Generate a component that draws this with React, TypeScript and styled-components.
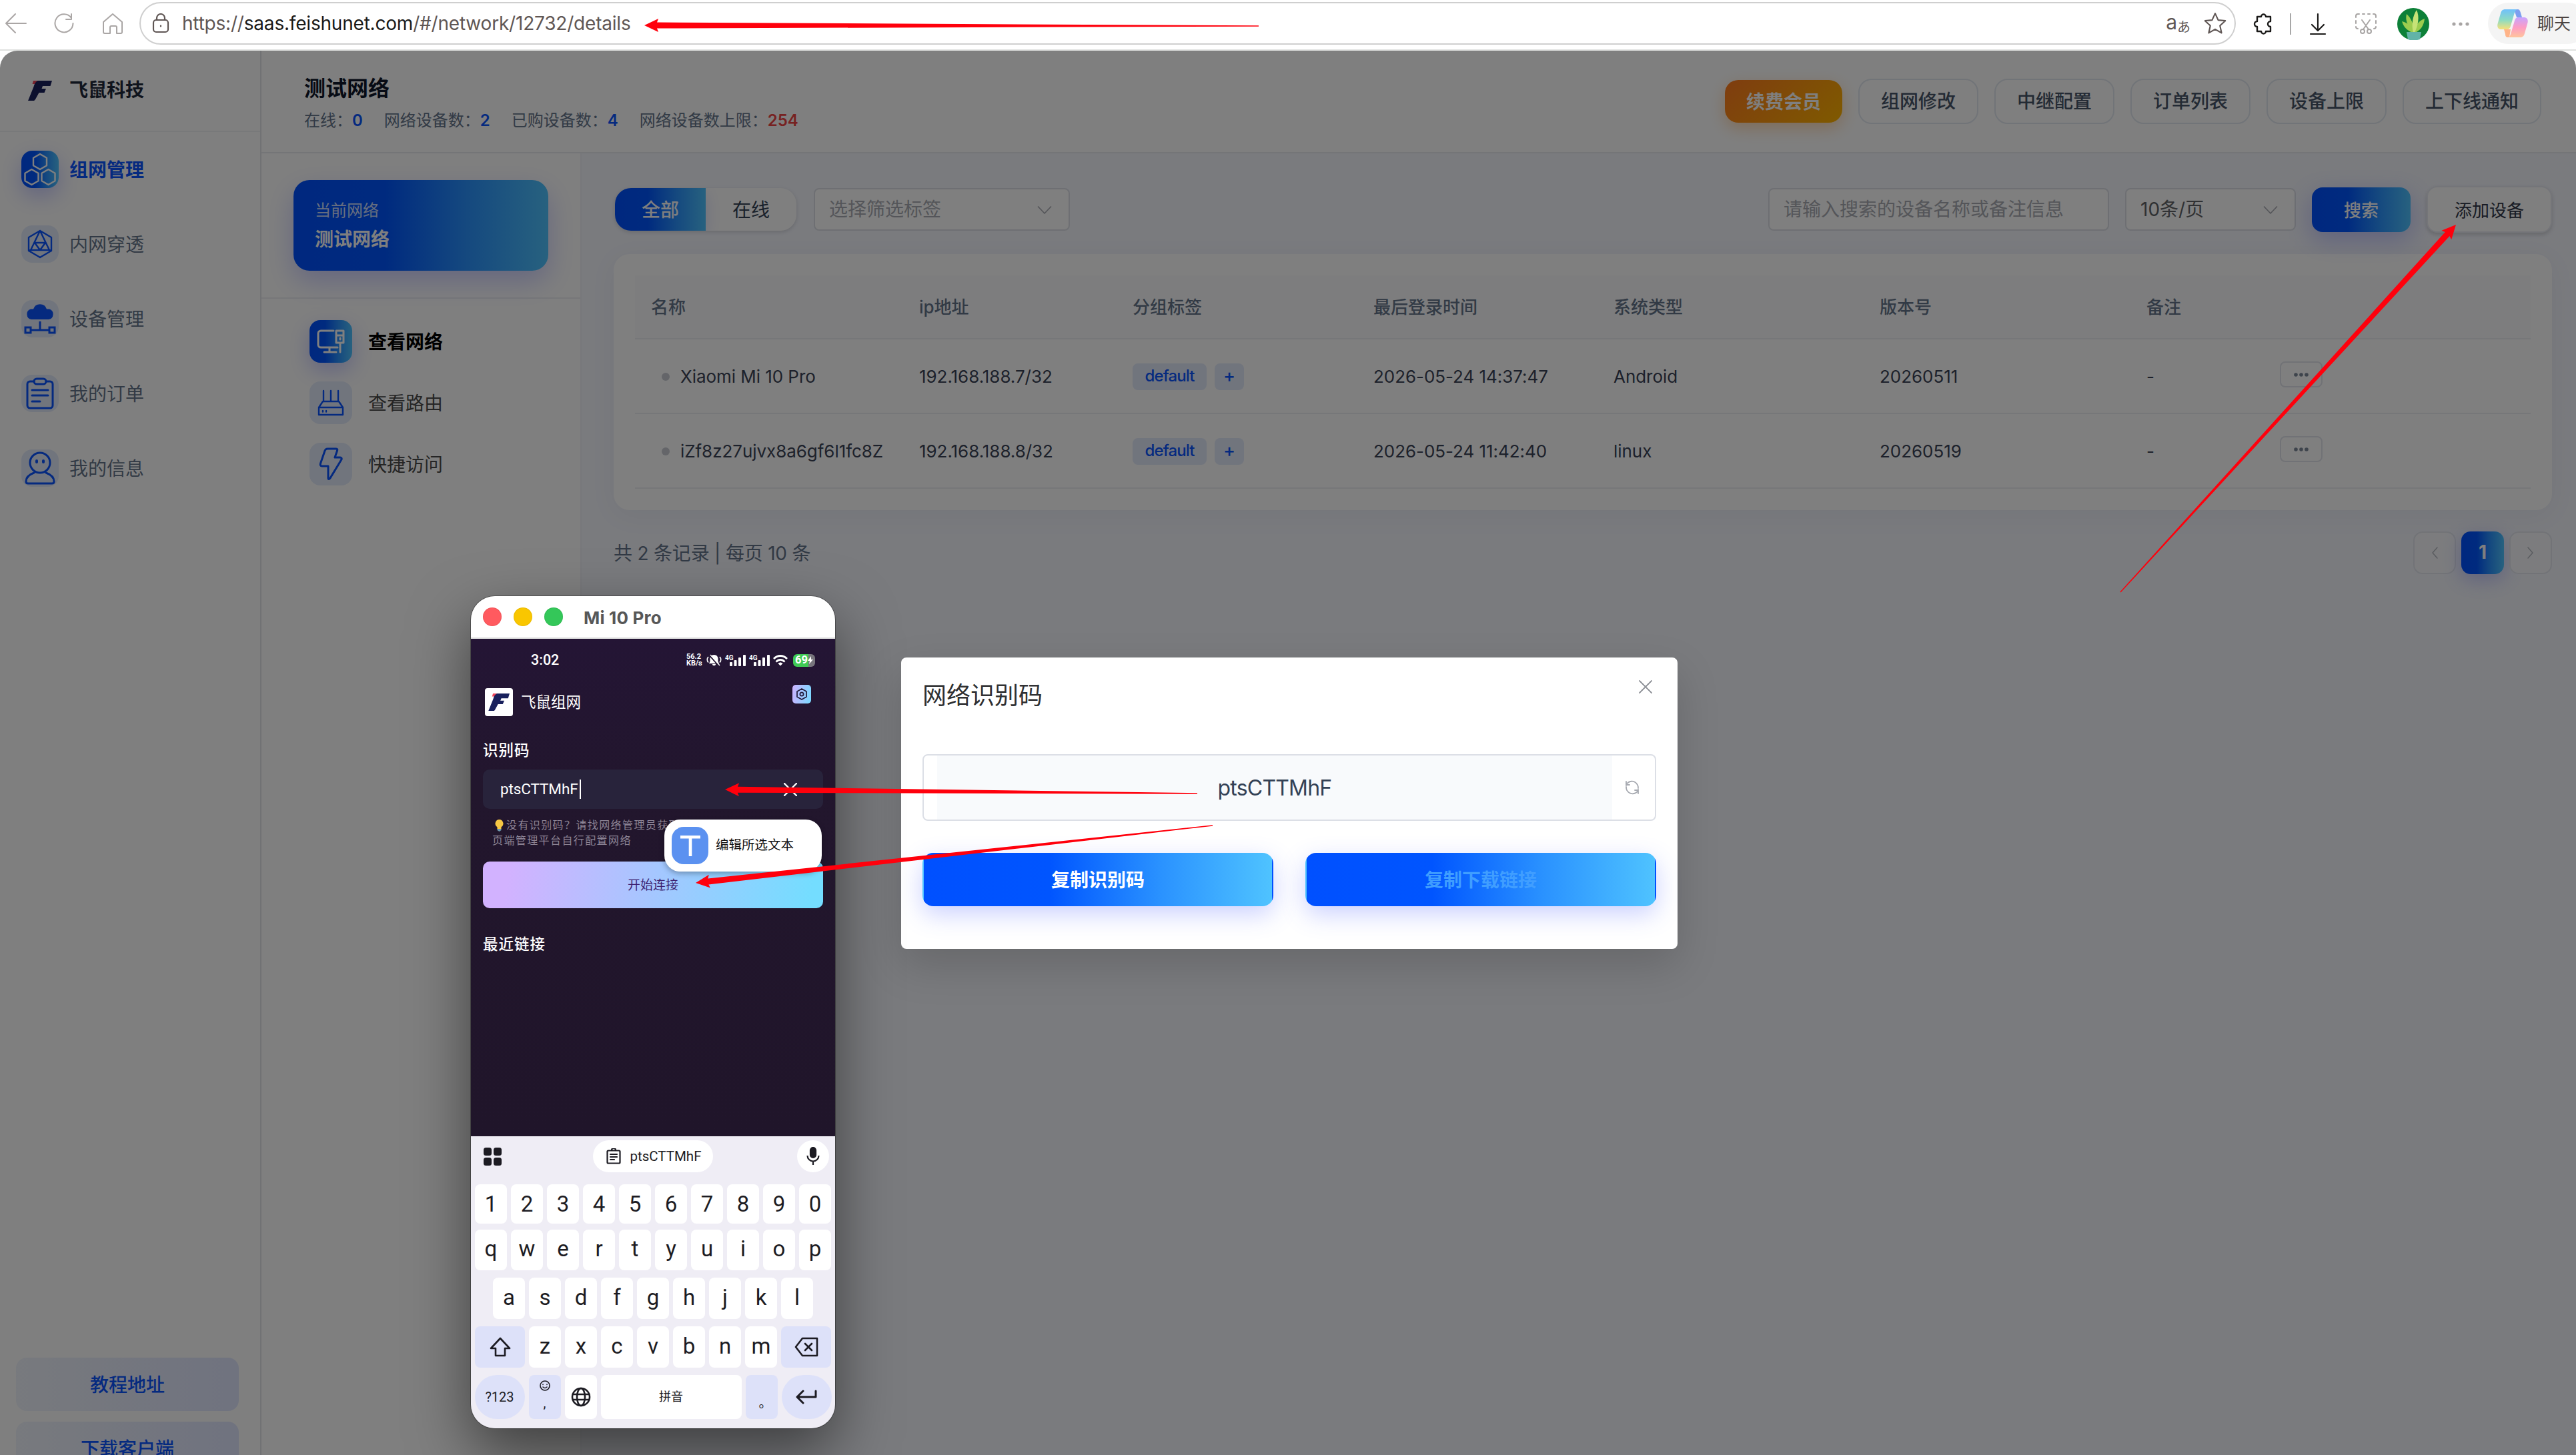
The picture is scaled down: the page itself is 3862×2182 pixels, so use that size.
import {FC, ReactNode} from 'react';
import styled, {createGlobalStyle, css} from 'styled-components';

const GRADIENT = 'linear-gradient(90deg, #0050ff 0%, #0055ff 36%, #2a92ff 68%, #4fc3ff 100%)';

const columns = ['名称', 'ip地址', '分组标签', '最后登录时间', '系统类型', '版本号', '备注', ''];

const devices = [
    {name: 'Xiaomi Mi 10 Pro', ip: '192.168.188.7/32', login: '2026-05-24 14:37:47', os: 'Android', version: '20260511'},
    {name: 'iZf8z27ujvx8a6gf6l1fc8Z', ip: '192.168.188.8/32', login: '2026-05-24 11:42:40', os: 'linux', version: '20260519'},
];

/**
 * Icons
 */
const Line: FC<{size?: number; w?: number; h?: number; box?: string; sw?: number; children: ReactNode}> = ({size = 32, w, h, box = '0 0 32 32', sw = 2, children}) => (
    <svg width={w || size} height={h || size} viewBox={box} fill="none" stroke="currentColor" strokeWidth={sw} strokeLinecap="round" strokeLinejoin="round">
        {children}
    </svg>
);

const BrandMark: FC<{size: number}> = ({size}) => (
    <svg width={size} height={size * 0.84} viewBox="0 0 36 30">
        <path d="M8 0h8l-3 5H6.500z" fill="#f0475b" />
        <path d="M15 0h21l-2.500 8H22l-1.500 4H27l-2.500 6H16.500L11 28l-2 2H0L8.500 9C10 4 11.500 1.500 15 0z" fill="#18205c" />
    </svg>
);

const HexIcon = () => (
    <Line size={52} box="0 0 52 52" sw={2.400}>
        <path d="M26 3l10 5.800v11.400L26 26l-10-5.800V8.800zM13.500 26l10 5.800v11.400L13.500 49l-10-5.800V31.800zM38.500 26l10 5.800v11.400l-10 5.800-10-5.800V31.800z" />
    </Line>
);

const PolyIcon = () => (
    <Line w={38} h={44} box="0 0 38 44" sw={2.400}>
        <path d="M19 2l17 10v20L19 42 2 32V12zM19 2L5 31h28zM11 20h16l-8 11zM2 32l3-1M36 32l-3-1" />
    </Line>
);

const CloudIcon = () => (
    <svg width="48" height="46" viewBox="0 0 48 46" fill="none" stroke="currentColor" strokeWidth="3">
        <path d="M11 24a8 8 0 0 1-1-15.500h4a10.500 10.500 0 0 1 20 0h4a8 8 0 0 1-1 15.500z" fill="currentColor" stroke="none" />
        <path d="M24 27v13M11 40h26M2 36h8v8H2zM38 36h8v8h-8z" />
    </svg>
);

const OrderIcon = () => (
    <Line w={42} h={48} box="0 0 42 48" sw={3}>
        <path d="M12 6H6a4 4 0 0 0-4 4v32a4 4 0 0 0 4 4h30a4 4 0 0 0 4-4V10a4 4 0 0 0-4-4h-6" />
        <rect x="12" y="2" width="18" height="8" rx="4" />
        <path d="M9 19h24M9 27h24M9 36h12" />
    </Line>
);

const UserIcon = () => (
    <Line w={46} h={50} box="0 0 46 50" sw={3}>
        <circle cx="23" cy="17" r="15" />
        <path d="M14 32c-8 3-12 8-12 13 0 2 1 3 3 3h36c2 0 3-1 3-3 0-5-4-10-12-13" />
        <path d="M18 14v2M28 14v2" strokeWidth="4" />
    </Line>
);

const ScreenIcon = () => (
    <Line w={42} h={36} box="0 0 42 36" sw={3}>
        <path d="M25 2H6a4 4 0 0 0-4 4v17a4 4 0 0 0 4 4h25M19 27v7M11 34h18" />
        <path d="M29 2h11v18H29zM29 9h11M35 13v2M35 20v14" />
    </Line>
);

const RouterIcon = () => (
    <Line w={40} h={40} box="0 0 40 40" sw={2.400}>
        <path d="M9 2v16M20 2v16M31 2v16M8 18h24l6 9v11H2V27zM2 27h36M8 32v1.500M13 32v1.500" />
    </Line>
);

const BoltIcon = () => (
    <Line w={36} h={50} box="0 0 36 50" sw={3}>
        <path d="M13 2h13c2 0 2 1 1.500 3L24 15h8c2 0 2.500 1.500 2 3L17 46c-1.500 2-3 2-3 0V28H5c-3 0-3-2-2.500-4L9 5c.8-2 2-3 4-3z" />
    </Line>
);

const Chevron = () => (
    <Line w={22} h={14} box="0 0 22 14" sw={1.700}><path d="M1.500 2L11 12l9.500-10" /></Line>
);

const menu = [
    {label: '组网管理', icon: <HexIcon />, active: true},
    {label: '内网穿透', icon: <PolyIcon />},
    {label: '设备管理', icon: <CloudIcon />},
    {label: '我的订单', icon: <OrderIcon />},
    {label: '我的信息', icon: <UserIcon />},
];

const subMenu = [
    {label: '查看网络', icon: <ScreenIcon />, active: true},
    {label: '查看路由', icon: <RouterIcon />},
    {label: '快捷访问', icon: <BoltIcon />},
];

/**
 * Browser toolbar
 */
const BrowserBar: FC = () => (
    <Toolbar>
        <NavIcons>
            <Line size={32} sw={2}><path d="M31 16H1M15 2L1 16l14 14" /></Line>
            <Line size={32} sw={2}><path d="M27 8A13.500 13.500 0 1 0 29.500 16M27 2v8h-8" /></Line>
            <Line size={34} box="0 0 34 34" sw={2}><path d="M3 14L17 2l14 12v15a2 2 0 0 1-2 2h-6V22a2 2 0 0 0-2-2h-6a2 2 0 0 0-2 2v9H5a2 2 0 0 1-2-2z" /></Line>
        </NavIcons>
        <AddressBar>
            <Line w={26} h={30} box="0 0 26 30" sw={2.200}>
                <rect x="2" y="10" width="22" height="18" rx="4" /><path d="M7 10V7a6 6 0 0 1 12 0v3M13 18.500v1" />
            </Line>
            <Url>https://<b>saas.feishunet.com</b>/#/network/12732/details</Url>
            <Translate>a<small>あ</small></Translate>
            <Line size={34} sw={2}>
                <path d="M16 2l4.300 9.400 10 1-7.500 6.900 2.200 10.200-9-5.200-9 5.200 2.200-10.200-7.500-6.900 10-1z" />
            </Line>
        </AddressBar>
        <Tools>
            <Line size={34} box="0 0 34 34" sw={2.400}>
                <path d="M9 6h6a3.500 3.500 0 0 1 7 0h7v7a4 4 0 0 0 0 8v7h-7a3.500 3.500 0 0 1-7 0H9v-7a4 4 0 0 1 0-8z" />
            </Line>
            <Separator />
            <Line w={26} h={34} box="0 0 26 34" sw={2.200}><path d="M13 2v25M4 18l9 9 9-9M2 32h22" /></Line>
            <Muted>
                <Line size={34} box="0 0 34 34" sw={2}>
                    <path d="M2 7V5a3 3 0 0 1 3-3h2M12 2h3M20 2h3M28 2h1a3 3 0 0 1 3 3v2M32 12v4M2 12v4M2 21a3 3 0 0 0 3 3M32 21a3 3 0 0 1-3 3M11 11l10 14M23 11L13 25" />
                    <circle cx="12" cy="28" r="3" /><circle cx="22" cy="28" r="3" />
                </Line>
            </Muted>
            <svg width="48" height="48" viewBox="0 0 48 48">
                <circle cx="24" cy="24" r="24" fill="#0d8038" />
                <g fill="#9ccc4f">
                    <path d="M23 37C18 30 11 20 14 9c7 6 11 16 11 28z" />
                    <path d="M24 37c-5-1-14-6-17-17 9 2 15 8 17 17z" />
                    <path d="M26 37c0-8 5-18 15-21-1 10-6 18-15 21z" />
                </g>
                <path d="M24 37c-3-12-1-25 5-34 5 10 2 24-3 34z" fill="#c6e377" />
                <path d="M14 36h22l-2 11c-6 2-13 2-18 0z" fill="#62b3a8" />
            </svg>
            <Muted>
                <svg width="28" height="8" viewBox="0 0 28 8" fill="currentColor">
                    <circle cx="4" cy="4" r="2.600" /><circle cx="14" cy="4" r="2.600" /><circle cx="24" cy="4" r="2.600" />
                </svg>
            </Muted>
        </Tools>
        <ChatPill>
            <svg width="46" height="42" viewBox="0 0 46 42">
                <defs>
                    <linearGradient id="cpA" x1="0" y1="0" x2="0" y2="1">
                        <stop offset="0" stopColor="#6fc0fb" /><stop offset=".55" stopColor="#8fdcc0" /><stop offset="1" stopColor="#f7e07a" />
                    </linearGradient>
                    <linearGradient id="cpB" x1="0" y1="0" x2="0" y2="1">
                        <stop offset="0" stopColor="#c7a4ff" /><stop offset=".5" stopColor="#fd9cc4" /><stop offset="1" stopColor="#ffc59c" />
                    </linearGradient>
                </defs>
                <path d="M25 0h6c2 0 3 2 4 5l2 7h-8z" fill="#7d9ff0" />
                <path d="M10 30h10l-2 12h-2c-3 0-4-2-4-5z" fill="#ffb489" />
                <path d="M12 0h18c-3 1-4 4-5 8l-5 17c-1 4-3 5-6 5H6c-5 0-7-4-5-10L5 6c1-4 3-6 7-6z" fill="url(#cpA)" />
                <path d="M34 42H16c3-1 4-4 5-8l5-17c1-4 3-5 6-5h8c5 0 7 4 5 10l-4 14c-1 4-3 6-7 6z" fill="url(#cpB)" />
            </svg>
            聊天
        </ChatPill>
    </Toolbar>
);

const DeviceTable: FC = () => (
    <TableCard>
        <HeaderTr>
            {columns.map((c, i) => <Cell key={i}>{c}</Cell>)}
        </HeaderTr>
        {devices.map((d) => (
            <Tr key={d.ip}>
                <Cell><Dot />{d.name}</Cell>
                <Cell>{d.ip}</Cell>
                <Cell><Tag>default</Tag><Tag $plus>+</Tag></Cell>
                <Cell>{d.login}</Cell>
                <Cell>{d.os}</Cell>
                <Cell>{d.version}</Cell>
                <Cell>-</Cell>
                <Cell>
                    <MoreButton>
                        <svg width="24" height="6" viewBox="0 0 24 6" fill="currentColor">
                            <circle cx="4" cy="3" r="2.800" /><circle cx="12" cy="3" r="2.800" /><circle cx="20" cy="3" r="2.800" />
                        </svg>
                    </MoreButton>
                </Cell>
            </Tr>
        ))}
    </TableCard>
);

const Console: FC = () => (
    <Page>
        <Sidebar>
            <Brand><BrandMark size={36} />飞鼠科技</Brand>
            <Menu>
                {menu.map((m) => (
                    <MenuItem key={m.label} $active={m.active}>
                        <IconBox $size={56} $active={m.active}>{m.icon}</IconBox>
                        <MenuLabel>{m.label}</MenuLabel>
                    </MenuItem>
                ))}
            </Menu>
            <SideButton>教程地址</SideButton>
            <SideButton>下载客户端</SideButton>
        </Sidebar>
        <Content>
            <Header>
                <div>
                    <NetworkName>测试网络</NetworkName>
                    <Stats>
                        <span>在线：<b>0</b></span>
                        <span>网络设备数：<b>2</b></span>
                        <span>已购设备数：<b>4</b></span>
                        <Limit>网络设备数上限：<b>254</b></Limit>
                    </Stats>
                </div>
                <HeaderActions>
                    <RenewButton>续费会员</RenewButton>
                    {['组网修改', '中继配置', '订单列表', '设备上限', '上下线通知'].map((t) => <HeaderButton key={t}>{t}</HeaderButton>)}
                </HeaderActions>
            </Header>
            <Body>
                <SubSidebar>
                    <CurrentWrap>
                        <CurrentCard><small>当前网络</small>测试网络</CurrentCard>
                    </CurrentWrap>
                    <SubMenu>
                        {subMenu.map((m) => (
                            <SubItem key={m.label} $active={m.active}>
                                <IconBox $size={64} $active={m.active}>{m.icon}</IconBox>
                                <MenuLabel>{m.label}</MenuLabel>
                            </SubItem>
                        ))}
                    </SubMenu>
                </SubSidebar>
                <Main>
                    <Filters>
                        <Segment><SegmentItem $active>全部</SegmentItem><SegmentItem>在线</SegmentItem></Segment>
                        <Field $width={384} $hint>选择筛选标签<Chevron /></Field>
                        <Spacer />
                        <Field $width={511} $hint>请输入搜索的设备名称或备注信息</Field>
                        <Field $width={256}>10条/页<Chevron /></Field>
                        <SearchButton>搜索</SearchButton>
                        <AddButton>添加设备</AddButton>
                    </Filters>
                    <DeviceTable />
                    <Footer>
                        <Total>共 2 条记录 | 每页 10 条</Total>
                        <Pager>
                            <PageButton><Line w={12} h={20} box="0 0 12 20" sw={1.500}><path d="M10 2L3 10l7 8" /></Line></PageButton>
                            <PageButton $active>1</PageButton>
                            <PageButton><Line w={12} h={20} box="0 0 12 20" sw={1.500}><path d="M2 2l7 8-7 8" /></Line></PageButton>
                        </Pager>
                    </Footer>
                </Main>
            </Body>
        </Content>
        <Overlay><CodeDialog /></Overlay>
    </Page>
);

const CodeDialog: FC = () => (
    <Dialog>
        <DialogHead>
            网络识别码
            <Line size={22} box="0 0 22 22" sw={1.800}><path d="M2 2l18 18M20 2L2 20" /></Line>
        </DialogHead>
        <CodeInput>
            <CodeValue>ptsCTTMhF</CodeValue>
            <Line size={24} box="0 0 24 24" sw={1.800}>
                <path d="M3 9V3M3 8h5M3 8c3-6 12-8 17 0 1 2 1 4 1 5M21 15v6M21 16h-5M21 16c-3 6-12 8-17 0-1-2-1-3-1-5" />
            </Line>
        </CodeInput>
        <DialogButtons>
            <DialogButton>复制识别码</DialogButton>
            <DialogButton $faded>复制下载链接</DialogButton>
        </DialogButtons>
    </Dialog>
);

const Signal: FC = () => (
    <SignalBox>
        <span>4G</span>
        <svg width="24" height="17" viewBox="0 0 24 17" fill="#fff">
            <rect x="0" y="11" width="4" height="6" rx="1" /><rect x="6.500" y="8" width="4" height="9" rx="1" />
            <rect x="13" y="4" width="4" height="13" rx="1" /><rect x="20" y="0" width="4" height="17" rx="1" />
        </svg>
    </SignalBox>
);

const Phone: FC = () => (
    <PhoneWindow>
        <TitleBar>
            <Light $color="#ff5a5f" /><Light $color="#f9c600" /><Light $color="#34c759" />
            <span>Mi 10 Pro</span>
        </TitleBar>
        <AppScreen>
            <StatusBar>
                <Clock>3:02</Clock>
                <Speed>56.2<br />KB/s</Speed>
                <svg width="23" height="19" viewBox="0 0 23 19" fill="#fff">
                    <path d="M11.500 1c4 0 6 3 6 6v4l1.500 3h-15l1.500-3V7c0-3 2-6 6-6zM9 15h5c0 3-5 3-5 0z" />
                    <path d="M3 4C.8 6.500.8 10 3 12.500M20 4c2.200 2.500 2.200 6 0 8.500" stroke="#fff" strokeWidth="1.800" fill="none" />
                    <path d="M4 1l15 17" stroke="#241733" strokeWidth="2" /><path d="M6 1l14 16" stroke="#fff" strokeWidth="1.400" />
                </svg>
                <Signal />
                <Signal />
                <svg width="22" height="17" viewBox="0 0 22 17" fill="none" stroke="#fff" strokeWidth="2.800">
                    <path d="M1 6c6-6 14-6 20 0M4.500 10.500c4-4 9-4 13 0" /><path d="M7.500 13c2-2 5-2 7 0L11 16.500z" fill="#fff" stroke="none" />
                </svg>
                <Battery>69<svg width="8" height="12" viewBox="0 0 8 12" fill="#fff"><path d="M5 0L0 7h3l-1 5 6-7H5z" /></svg></Battery>
            </StatusBar>
            <AppHead>
                <AppLogo><BrandMark size={32} /></AppLogo>
                飞鼠组网
                <Gear>
                    <Line size={18} box="0 0 18 18" sw={1.800}><path d="M9 1l7 4v8l-7 4-7-4V5z" /><circle cx="9" cy="9" r="2.600" /></Line>
                </Gear>
            </AppHead>
            <AppLabel>识别码</AppLabel>
            <AppInput>
                ptsCTTMhF<Caret />
                <Line size={20} box="0 0 20 20" sw={2.400}><path d="M1 1l18 18M19 1L1 19" /></Line>
            </AppInput>
            <Hint>
                <svg width="13" height="18" viewBox="0 0 13 18">
                    <path d="M6.500 0A6.200 6.200 0 0 1 9.500 11.500V14h-6v-2.500A6.200 6.200 0 0 1 6.500 0z" fill="#f6c744" /><path d="M3.500 14h6v2l-3 2-3-2z" fill="#6d98ad" />
                </svg>
                没有识别码？请找网络管理员获取<br />页端管理平台自行配置网络
            </Hint>
            <ConnectButton>开始连接</ConnectButton>
            <AppLabel $last>最近链接</AppLabel>
            <Popover>
                <PopIcon>
                    <svg width="30" height="31" viewBox="0 0 30 31" fill="#fff"><rect width="30" height="4.500" /><rect x="12.700" width="4.600" height="31" /></svg>
                </PopIcon>
                编辑所选文本
            </Popover>
        </AppScreen>
        <Keyboard>
            <Suggest>
                <svg width="27" height="27" viewBox="0 0 27 27" fill="#1c1b22">
                    <rect width="12" height="12" rx="3.500" /><rect x="15" width="12" height="12" rx="3.500" />
                    <rect y="15" width="12" height="12" rx="3.500" /><rect x="15" y="15" width="12" height="12" rx="3.500" />
                </svg>
                <ClipPill>
                    <Line w={22} h={24} box="0 0 22 24" sw={2.200}>
                        <rect x="1.500" y="3.500" width="19" height="19" rx="1.500" /><path d="M8 3a3 3 0 0 1 6 0M6 9h10M6 13h10M6 17h6" />
                    </Line>
                    ptsCTTMhF
                </ClipPill>
                <Mic>
                    <svg width="20" height="28" viewBox="0 0 20 28" fill="none" stroke="#1c1b22" strokeWidth="2.200">
                        <rect x="6" y="1" width="8" height="15" rx="4" fill="#1c1b22" /><path d="M1.500 13a8.500 8.500 0 0 0 17 0M10 21v6" />
                    </svg>
                </Mic>
            </Suggest>
            <KeyRow $h={59} $gap={9}>{[...'1234567890'].map((k) => <Key key={k}>{k}</Key>)}</KeyRow>
            <KeyRow $h={61} $gap={11}>{[...'qwertyuiop'].map((k) => <Key key={k} $lift>{k}</Key>)}</KeyRow>
            <KeyRow $h={62} $gap={11}>{[...'asdfghjkl'].map((k) => <Key key={k} $lift>{k}</Key>)}</KeyRow>
            <KeyRow $h={62} $gap={11}>
                <Key $w={75} $tint><Line w={32} h={30} box="0 0 32 30" sw={2.600}><path d="M16 2l14 15h-7v11H9V17H2z" /></Line></Key>
                {[...'zxcvbnm'].map((k) => <Key key={k} $lift>{k}</Key>)}
                <Key $w={75} $tint><Line w={36} h={30} box="0 0 36 30" sw={2.600}><path d="M12 2h22v26H12L2 15zM16 10l10 10M26 10L16 20" /></Line></Key>
            </KeyRow>
            <KeyRow $h={66} $gap={0}>
                <Key $w={75} $tint $round $text={20}>?123</Key>
                <Key $tint $stack $text={20}>
                    <Line size={16} box="0 0 16 16" sw={1.600}><circle cx="8" cy="8" r="7" /><path d="M5 6v.5M11 6v.5M5 10c2 2 4 2 6 0" /></Line>
                    ,
                </Key>
                <Key><Line size={30} box="0 0 30 30" sw={2.600}>
                    <circle cx="15" cy="15" r="13" /><ellipse cx="15" cy="15" rx="6" ry="13" /><path d="M3 11h24M3 19h24" />
                </Line></Key>
                <Key $w={211} $text={18}>拼音</Key>
                <Key $tint $stack $text={20}><span /><FullStop>。</FullStop></Key>
                <Key $w={75} $tint $round><Line w={32} h={22} box="0 0 32 22" sw={3}><path d="M30 2v9H3M11 2l-9 9 9 9" /></Line></Key>
            </KeyRow>
        </Keyboard>
    </PhoneWindow>
);

/**
 * Tapered arrows, drawn from tail to tip
 */
const arrows = [
    [1887, 39, 966, 38],
    [3179, 888, 3682, 337],
    [1795, 1190, 1087, 1184],
    [1818, 1238, 1043, 1324],
];

const arrowPoints = ([x1, y1, x2, y2]: number[]) => {
    const len = Math.hypot(x2 - x1, y2 - y1);
    const ux = (x2 - x1) / len;
    const uy = (y2 - y1) / len;
    const at = (back: number, side: number) => `${x2 - ux * back - uy * side},${y2 - uy * back + ux * side}`;
    return [at(len, 0.7), at(19, 4.5), at(21, 10), at(0, 0), at(21, -10), at(19, -4.5), at(len, -0.7)].join(' ');
};

const Arrows: FC = () => (
    <ArrowLayer viewBox="0 0 3862 2182">
        {arrows.map((a, i) => <polygon key={i} points={arrowPoints(a)} fill="#ff000c" />)}
    </ArrowLayer>
);

const App: FC = () => (
    <Screen>
        <GlobalStyle />
        <BrowserBar />
        <Console />
        <Phone />
        <Arrows />
    </Screen>
);

export default App;

const GlobalStyle = createGlobalStyle`
    * { box-sizing: border-box; }
    body {
        margin: 0;
        background: #fff;
        font-family: Inter, "Noto Sans CJK SC", sans-serif;
        font-size: 28px;
        line-height: 1.2;
    }
    svg { display: block; flex: none; }
`;

const center = css`
    display: flex;
    align-items: center;
    justify-content: center;
    flex: none;
`;

// text sits a little below the middle of its box
const label = css`
    ${center}
    padding-top: 3px;
`;

const Screen = styled.div`
    position: relative;
    width: 3862px;
    height: 2182px;
    overflow: hidden;
    white-space: nowrap;
`;

const Toolbar = styled.div`
    display: flex;
    align-items: center;
    height: 76px;
    padding: 0 0 4px 8px;
    border-bottom: 2px solid #dfe1df;
    > * { flex: none; }
`;

const NavIcons = styled.div`
    display: flex;
    gap: 40px;
    width: 201px;
    padding-top: 2px;
    color: #aaa6a5;
`;

const AddressBar = styled.div`
    display: flex;
    align-items: center;
    width: 3143px;
    height: 64px;
    padding: 0 12px 0 17px;
    border: 2px solid #cfcfcf;
    border-radius: 32px;
    color: #5f5654;
`;

const Url = styled.div`
    flex: 1;
    padding-top: 2px;
    margin-left: 19px;
    font-size: 28px;
    letter-spacing: -0.2px;
    b { color: #1b1a19; font-weight: 400; }
`;

const Translate = styled.div`
    margin-right: 20px;
    font-size: 30px;
    line-height: 34px;
    small { font-size: 20px; position: relative; top: 4px; }
`;

const Tools = styled.div`
    display: flex;
    align-items: center;
    width: 378px;
    padding: 1px 0 0 23px;
    color: #1b1a19;
    > * { margin-right: 27px; }
    > svg:nth-of-type(1) { margin-right: 24px; }
    > svg:nth-of-type(2) { margin-right: 42px; }
    > svg:nth-of-type(3) { margin-right: 33px; }
`;

const Separator = styled.i`
    width: 2px;
    height: 32px;
    background: #a8a8a8;
`;

const Muted = styled.span`
    color: #a8a5a4;
    &:nth-of-type(1) { margin-right: 30px; }
`;

const ChatPill = styled.div`
    display: flex;
    align-items: center;
    gap: 14px;
    width: 150px;
    height: 62px;
    padding-left: 14px;
    border-radius: 31px;
    background: #f4f4f4;
    color: #4c4442;
    font-size: 25px;
`;

const Page = styled.div`
    position: relative;
    display: flex;
    height: 2106px;
    background: #fff;
    border-radius: 26px 26px 0 0;
    overflow: hidden;
`;

const Sidebar = styled.div`
    display: flex;
    flex-direction: column;
    flex: none;
    width: 392px;
    border-right: 2px solid #e2e5e8;
    > * { flex: none; }
`;

const Brand = styled.div`
    display: flex;
    align-items: center;
    gap: 26px;
    height: 122px;
    padding-left: 42px;
    border-bottom: 2px solid #f1f3f5;
    font-weight: 700;
    color: #1e293b;
`;

const Menu = styled.div`
    display: flex;
    flex-direction: column;
    gap: 56px;
    height: 1838px;
    padding: 28px 32px;
`;

const MenuItem = styled.div<{$active?: boolean}>`
    display: flex;
    align-items: center;
    gap: 16px;
    color: ${(p) => (p.$active ? '#0a54ff' : '#64748b')};
    font-weight: ${(p) => (p.$active ? 700 : 400)};
`;

const MenuLabel = styled.span`
    padding-top: 3px;
`;

const IconBox = styled.div<{$size: number; $active?: boolean}>`
    ${center}
    width: ${(p) => p.$size}px;
    height: ${(p) => p.$size}px;
    border-radius: 16px;
    color: ${(p) => (p.$active ? '#fff' : '#0a54ff')};
    background: ${(p) => (p.$active ? GRADIENT : '#e3ebfb')};
    box-shadow: ${(p) => (p.$active ? '0 12px 32px rgba(70, 80, 255, .3)' : 'none')};
`;

const SideButton = styled.div`
    ${label}
    height: 80px;
    margin: 0 32px 16px 24px;
    border-radius: 16px;
    background: linear-gradient(90deg, #f0f4fc, #e0e6ff);
    color: #0a54ff;
    font-weight: 500;
`;

const Content = styled.div`
    display: flex;
    flex-direction: column;
    flex: 1;
`;

const Header = styled.div`
    display: flex;
    justify-content: space-between;
    height: 154px;
    padding: 38px 52px 0 64px;
    border-bottom: 2px solid #e8eaee;
`;

const NetworkName = styled.div`
    font-size: 32px;
    line-height: 38px;
    font-weight: 700;
    color: #0f172a;
`;

const Stats = styled.div`
    display: flex;
    gap: 32px;
    margin-top: 14px;
    font-size: 24px;
    line-height: 30px;
    color: #64748b;
    b { color: #0a54ff; font-weight: 600; }
`;

const Limit = styled.span`
    && b { color: #ef4444; }
`;

const HeaderActions = styled.div`
    display: flex;
    align-items: center;
    gap: 24px;
    height: 68px;
    margin-top: 4px;
`;

const HeaderButton = styled.div`
    ${label}
    height: 68px;
    padding: 2px 32px 0;
    border: 2px solid #e2e8f0;
    border-radius: 20px;
    color: #475569;
    font-weight: 500;
`;

const RenewButton = styled.div`
    ${label}
    width: 176px;
    height: 64px;
    border-radius: 20px;
    background: linear-gradient(135deg, #ff7a1f, #ffb400);
    box-shadow: 0 8px 24px rgba(255, 140, 30, .35);
    color: #fff;
    font-weight: 700;
`;

const Body = styled.div`
    display: flex;
    flex: 1;
`;

const SubSidebar = styled.div`
    width: 480px;
    border-right: 2px solid #eef1f6;
`;

const CurrentWrap = styled.div`
    height: 218px;
    padding: 40px 48px;
    border-bottom: 2px solid #eeeff2;
`;

const CurrentCard = styled.div`
    display: flex;
    flex-direction: column;
    height: 136px;
    padding: 30px 32px;
    border-radius: 24px;
    background: ${GRADIENT};
    box-shadow: 0 16px 40px rgba(70, 80, 255, .28);
    color: #fff;
    font-weight: 600;
    line-height: 40px;
    small { font-size: 24px; line-height: 32px; margin-bottom: 7px; font-weight: 400; opacity: .8; }
`;

const SubMenu = styled.div`
    display: flex;
    flex-direction: column;
    gap: 28px;
    padding: 32px 72px;
`;

const SubItem = styled.div<{$active?: boolean}>`
    display: flex;
    align-items: center;
    gap: 24px;
    color: ${(p) => (p.$active ? '#000' : '#4a4a4a')};
    font-weight: ${(p) => (p.$active ? 700 : 400)};
`;

const Main = styled.div`
    flex: 1;
    padding: 48px 36px 0 48px;
    background: #f4f6fd;
`;

const Filters = styled.div`
    display: flex;
    align-items: center;
    gap: 24px;
    height: 72px;
`;

const Segment = styled.div`
    display: flex;
    margin: 0 2px;
    border-radius: 24px;
    overflow: hidden;
    background: #fff;
    box-shadow: 0 2px 6px rgba(0, 0, 0, .14);
`;

const SegmentItem = styled.div<{$active?: boolean}>`
    ${label}
    width: 136px;
    height: 64px;
    background: ${(p) => (p.$active ? GRADIENT : 'none')};
    box-shadow: ${(p) => (p.$active ? '0 8px 24px rgba(70, 80, 255, .2)' : 'none')};
    color: ${(p) => (p.$active ? '#fff' : '#334155')};
    font-weight: ${(p) => (p.$active ? 500 : 400)};
`;

const Field = styled.div<{$width: number; $hint?: boolean}>`
    display: flex;
    align-items: center;
    justify-content: space-between;
    width: ${(p) => p.$width}px;
    height: 64px;
    padding: 2px 25px 0 21px;
    border: 2px solid #dcdfe6;
    border-radius: 8px;
    background: #fff;
    color: ${(p) => (p.$hint ? '#a8abb2' : '#606266')};
    svg { color: #a8abb2; }
`;

const Spacer = styled.div`
    flex: 1;
`;

const SearchButton = styled.div`
    ${label}
    width: 148px;
    height: 67px;
    border-radius: 16px;
    background: ${GRADIENT};
    box-shadow: 0 12px 36px rgba(70, 80, 255, .3);
    color: #fff;
    font-size: 26px;
    font-weight: 500;
`;

const AddButton = styled.div`
    ${label}
    width: 188px;
    height: 70px;
    border: 2px solid #e9ebf2;
    border-radius: 16px;
    background: #fff;
    box-shadow: 0 3px 6px rgba(0, 0, 0, .16);
    color: #303748;
    font-size: 26px;
`;

const TableCard = styled.div`
    height: 384px;
    margin-top: 31px;
    padding: 32px;
    border-radius: 24px;
    background: #fff;
    box-shadow: 0 8px 40px rgba(15, 30, 80, .05);
`;

const Tr = styled.div`
    display: grid;
    grid-template-columns: 402px 320px 361px 360px 399px 400px 200px 1fr;
    align-items: center;
    height: 112px;
    padding-top: 1px;
    border-bottom: 2px solid #eceef3;
    color: #3a4356;
    font-size: 26px;
    letter-spacing: -0.05px;
`;

const HeaderTr = styled(Tr)`
    height: 96px;
    padding-top: 2px;
    background: #fafbfc;
    color: #64748b;
    font-weight: 500;
    letter-spacing: 0;
`;

const Cell = styled.div`
    display: flex;
    align-items: center;
    padding-left: 24px;
`;

const Dot = styled.i`
    width: 12px;
    height: 12px;
    margin: 0 16px;
    border-radius: 50%;
    background: #c8cbd2;
`;

const Tag = styled.div<{$plus?: boolean}>`
    ${center}
    width: ${(p) => (p.$plus ? 44 : 111)}px;
    height: 40px;
    margin-right: 12px;
    border-radius: 8px;
    background: #e3eafb;
    color: #0a54ff;
    font-size: ${(p) => (p.$plus ? 27 : 24)}px;
    font-weight: 500;
    letter-spacing: ${(p) => (p.$plus ? 0 : -0.9)}px;
`;

const MoreButton = styled.div`
    ${center}
    width: 64px;
    height: 39px;
    margin-bottom: 6px;
    border: 2px solid #e2e5ec;
    border-radius: 8px;
    color: #7d8899;
`;

const Footer = styled.div`
    display: flex;
    align-items: center;
    justify-content: space-between;
    height: 64px;
    margin-top: 32px;
    color: #64748b;
`;

const Total = styled.span`
    padding-top: 3px;
    letter-spacing: -0.2px;
`;

const Pager = styled.div`
    display: flex;
    gap: 8px;
`;

const PageButton = styled.div<{$active?: boolean}>`
    ${center}
    width: 64px;
    height: 64px;
    border: ${(p) => (p.$active ? 'none' : '2px solid #e4e7ee')};
    border-radius: 14px;
    background: ${(p) => (p.$active ? GRADIENT : '#f8f9fc')};
    box-shadow: ${(p) => (p.$active ? '0 8px 28px rgba(70, 80, 255, .3)' : 'none')};
    color: ${(p) => (p.$active ? '#fff' : '#b4b8c0')};
    font-weight: 700;
`;

const Overlay = styled.div`
    position: absolute;
    inset: 0;
    display: flex;
    justify-content: center;
    align-items: flex-start;
    padding: 910px 0 0 4px;
    background: rgba(0, 0, 0, .5);
`;

const Dialog = styled.div`
    width: 1164px;
    height: 437px;
    padding: 32px;
    border-radius: 8px;
    background: #fff;
    box-shadow: 0 24px 64px rgba(0, 0, 0, .16);
`;

const DialogHead = styled.div`
    display: flex;
    justify-content: space-between;
    height: 113px;
    padding-top: 1px;
    font-size: 36px;
    line-height: 48px;
    color: #303133;
    svg { margin: 0 5px 0 0; color: #909399; }
`;

const CodeInput = styled.div`
    display: flex;
    align-items: center;
    height: 100px;
    padding: 0 22px 0 20px;
    border: 2px solid #dcdfe6;
    border-radius: 8px;
    color: #a8abb2;
`;

const CodeValue = styled.div`
    ${label}
    width: 1012px;
    height: 96px;
    margin-right: 18px;
    background: #f8fafc;
    color: #334155;
    font-size: 32px;
    letter-spacing: -0.8px;
`;

const DialogButtons = styled.div`
    display: flex;
    gap: 48px;
    margin-top: 48px;
`;

const DialogButton = styled.div<{$faded?: boolean}>`
    ${label}
    flex: 1;
    height: 80px;
    border: 2px solid transparent;
    border-radius: 16px;
    background: ${GRADIENT};
    box-shadow: 0 12px 36px rgba(70, 90, 255, .28);
    color: ${(p) => (p.$faded ? '#409eff' : '#fff')};
    font-weight: 700;
`;

const PhoneWindow = styled.div`
    position: absolute;
    left: 706px;
    top: 894px;
    width: 546px;
    height: 1248px;
    border-radius: 36px;
    overflow: hidden;
    box-shadow: 0 0 0 1px rgba(0, 0, 0, .3), 0 36px 90px rgba(0, 0, 0, .5);
`;

const TitleBar = styled.div`
    display: flex;
    align-items: center;
    gap: 18px;
    height: 64px;
    padding-left: 18px;
    border-bottom: 2px solid #ddd;
    background: #fff;
    color: #575757;
    font-size: 26px;
    font-weight: 700;
    letter-spacing: .2px;
    span { margin-left: 13px; padding-top: 3px; }
`;

const Light = styled.i<{$color: string}>`
    width: 28px;
    height: 28px;
    border-radius: 50%;
    background: ${(p) => p.$color};
    box-shadow: inset 0 0 0 1px rgba(0, 0, 0, .06);
`;

const AppScreen = styled.div`
    position: relative;
    height: 746px;
    padding: 0 18px;
    background: linear-gradient(#241535, #22162d 30%, #20152a);
    color: #fff;
    font-family: Roboto, "Noto Sans CJK SC", sans-serif;
`;

const StatusBar = styled.div`
    display: flex;
    align-items: center;
    gap: 5px;
    height: 64px;
    padding-right: 12px;
`;

const Clock = styled.div`
    flex: 1;
    padding-left: 72px;
    font-size: 21.500px;
    font-weight: 500;
`;

const Speed = styled.div`
    width: 25px;
    font-size: 11px;
    line-height: 10px;
    font-weight: 700;
`;

const SignalBox = styled.div`
    display: flex;
    align-items: flex-end;
    justify-content: space-between;
    width: 31px;
    span { width: 7px; font-size: 10px; line-height: 9px; font-weight: 700; margin-bottom: auto; }
`;

const Battery = styled.div`
    ${center}
    width: 33px;
    height: 19px;
    margin-left: 3px;
    border-radius: 6px;
    background: linear-gradient(90deg, #3fcb54 70%, #77757c 70%);
    font-size: 16.500px;
    font-weight: 700;
`;

const AppHead = styled.div`
    display: flex;
    align-items: center;
    height: 42px;
    margin-top: 10px;
    padding-left: 3px;
    font-size: 22.500px;
`;

const AppLogo = styled.div`
    ${center}
    width: 42px;
    height: 42px;
    margin-right: 12px;
    border-radius: 4px;
    background: #fff;
`;

const Gear = styled.div`
    ${center}
    width: 28px;
    height: 28px;
    margin: -25px 18px 0 auto;
    border-radius: 5px;
    background: linear-gradient(100deg, #cdb2ff, #78daff);
    color: #24203f;
`;

const AppLabel = styled.div<{$last?: boolean}>`
    height: 80px;
    padding-top: ${(p) => (p.$last ? 39 : 36)}px;
    font-size: 22.500px;
    line-height: 30px;
    letter-spacing: 1px;
    font-weight: 500;
`;

const AppInput = styled.div`
    display: flex;
    align-items: center;
    height: 59px;
    padding: 0 39px 0 26px;
    border-radius: 10px;
    background: #28233b;
    font-size: 22.500px;
    letter-spacing: -0.1px;
    svg { margin-left: auto; }
`;

const Caret = styled.i`
    width: 2px;
    height: 29px;
    margin-left: 2px;
    background: #fff;
`;

const Hint = styled.div`
    height: 79px;
    padding: 13px 0 0 14px;
    color: #8d8495;
    font-size: 16px;
    line-height: 23px;
    letter-spacing: 1.400px;
    svg { display: inline-block; vertical-align: -4px; margin: 0 4px; }
`;

const ConnectButton = styled.div`
    ${label}
    height: 70px;
    border-radius: 10px;
    background: linear-gradient(100deg, #d2b2ff 8%, #74ddff 96%);
    color: #3c1f70;
    font-size: 19px;
`;

const Popover = styled.div`
    position: absolute;
    left: 290px;
    top: 271px;
    display: flex;
    align-items: center;
    width: 236px;
    height: 78px;
    padding-left: 11px;
    border-radius: 24px;
    background: #fff;
    box-shadow: 0 3px 8px rgba(0, 0, 0, .3);
    color: #111;
    font-size: 19.500px;
`;

const PopIcon = styled.div`
    ${center}
    width: 55px;
    height: 56px;
    margin-right: 11px;
    border-radius: 18px;
    background: #5b91f0;
`;

const Keyboard = styled.div`
    height: 438px;
    padding: 6px 6px 0;
    background: #efedf5;
    color: #1c1b22;
    font-family: Roboto, "Noto Sans CJK SC", sans-serif;
`;

const Suggest = styled.div`
    display: flex;
    align-items: center;
    justify-content: space-between;
    height: 66px;
    padding: 0 3px 18px 13px;
`;

const ClipPill = styled.div`
    ${center}
    gap: 14px;
    width: 180px;
    height: 48px;
    margin-left: 11px;
    padding-left: 2px;
    border-radius: 24px;
    background: #fff;
    font-size: 20.500px;
`;

const Mic = styled.div`
    ${center}
    width: 48px;
    height: 48px;
    border-radius: 50%;
    background: #fff;
`;

const KeyRow = styled.div<{$h: number; $gap: number}>`
    display: flex;
    justify-content: center;
    gap: 6px;
    height: ${(p) => p.$h}px;
    margin-bottom: ${(p) => p.$gap}px;
`;

const Key = styled.div<{$w?: number; $tint?: boolean; $round?: boolean; $stack?: boolean; $lift?: boolean; $text?: number}>`
    ${center}
    flex-direction: ${(p) => (p.$stack ? 'column' : 'row')};
    justify-content: ${(p) => (p.$stack ? 'space-between' : 'center')};
    width: ${(p) => p.$w || 48}px;
    padding: ${(p) => (p.$stack ? '8px 0 12px' : p.$lift ? '0 0 3px' : 0)};
    border-radius: ${(p) => (p.$round ? 34 : 8)}px;
    background: ${(p) => (p.$tint ? '#dde1f9' : '#fff')};
    font-size: ${(p) => p.$text || 33}px;
`;

const FullStop = styled.span`
    padding-left: 12px;
`;

const ArrowLayer = styled.svg`
    position: absolute;
    inset: 0;
    width: 3862px;
    height: 2182px;
`;
